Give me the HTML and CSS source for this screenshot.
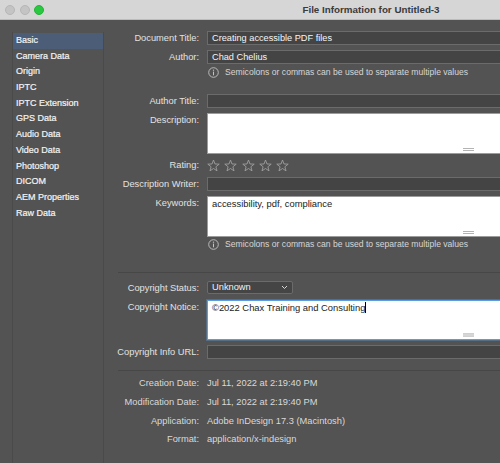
FILE: index.html
```html
<!DOCTYPE html>
<html lang="en">
<head>
    <meta charset="UTF-8">
    <meta name="viewport" content="width=device-width, initial-scale=1.0">
    <title>File Information for Untitled-3</title>
    <link rel="stylesheet" href="styles.css">
</head>
<body>
<div class="window">
    <div class="titlebar">
        <div class="lights">
            <span class="light"></span>
            <span class="light"></span>
            <span class="light green"></span>
        </div>
        <div class="title">File Information for Untitled-3</div>
        <div></div>
    </div>

    <div class="content">
        <div class="sidebar">
            <a href="#" class="menu-item active">Basic</a>
            <a href="#" class="menu-item">Camera Data</a>
            <a href="#" class="menu-item">Origin</a>
            <a href="#" class="menu-item">IPTC</a>
            <a href="#" class="menu-item">IPTC Extension</a>
            <a href="#" class="menu-item">GPS Data</a>
            <a href="#" class="menu-item">Audio Data</a>
            <a href="#" class="menu-item">Video Data</a>
            <a href="#" class="menu-item">Photoshop</a>
            <a href="#" class="menu-item">DICOM</a>
            <a href="#" class="menu-item">AEM Properties</a>
            <a href="#" class="menu-item">Raw Data</a>
        </div>

        <div class="form">
            <div class="row">
                <div class="label">Document Title:</div>
                <div class="input">Creating accessible PDF files</div>
            </div>
            <div class="row mt-5">
                <div class="label">Author:</div>
                <div class="input">Chad Chelius</div>
            </div>
            <div class="row mt-1">
                <div></div>
                <div class="info">
                    <svg class="info-icon" width="11" height="11" viewBox="0 0 11 11">
                        <circle cx="5.5" cy="5.5" r="4.8" fill="none" stroke="#c4c4c4" stroke-width="0.9"/>
                        <circle cx="5.5" cy="3.2" r="0.65" fill="#c4c4c4"/>
                        <line x1="5.5" y1="4.6" x2="5.5" y2="8.3" stroke="#c4c4c4" stroke-width="1"/>
                    </svg>
                    <span>Semicolons or commas can be used to separate multiple values</span>
                </div>
            </div>
            <div class="row mt-15">
                <div class="label">Author Title:</div>
                <div class="input"></div>
            </div>
            <div class="row mt-5">
                <div class="label">Description:</div>
                <div class="area"><span></span><div class="grip"></div></div>
            </div>
            <div class="row mt-4">
                <div class="label">Rating:</div>
                <div class="stars">
                    <svg width="13" height="13" viewBox="0 0 13 13"><polygon points="6.5,1 7.97,4.98 12.21,5.15 8.88,7.77 10.03,11.85 6.5,9.5 2.97,11.85 4.12,7.77 0.79,5.15 5.03,4.98"/></svg>
                    <svg width="13" height="13" viewBox="0 0 13 13"><polygon points="6.5,1 7.97,4.98 12.21,5.15 8.88,7.77 10.03,11.85 6.5,9.5 2.97,11.85 4.12,7.77 0.79,5.15 5.03,4.98"/></svg>
                    <svg width="13" height="13" viewBox="0 0 13 13"><polygon points="6.5,1 7.97,4.98 12.21,5.15 8.88,7.77 10.03,11.85 6.5,9.5 2.97,11.85 4.12,7.77 0.79,5.15 5.03,4.98"/></svg>
                    <svg width="13" height="13" viewBox="0 0 13 13"><polygon points="6.5,1 7.97,4.98 12.21,5.15 8.88,7.77 10.03,11.85 6.5,9.5 2.97,11.85 4.12,7.77 0.79,5.15 5.03,4.98"/></svg>
                    <svg width="13" height="13" viewBox="0 0 13 13"><polygon points="6.5,1 7.97,4.98 12.21,5.15 8.88,7.77 10.03,11.85 6.5,9.5 2.97,11.85 4.12,7.77 0.79,5.15 5.03,4.98"/></svg>
                </div>
            </div>
            <div class="row mt-5">
                <div class="label">Description Writer:</div>
                <div class="input"></div>
            </div>
            <div class="row mt-5">
                <div class="label">Keywords:</div>
                <div class="area"><span>accessibility, pdf, compliance</span><div class="grip"></div></div>
            </div>
            <div class="row">
                <div></div>
                <div class="info">
                    <svg class="info-icon" width="11" height="11" viewBox="0 0 11 11">
                        <circle cx="5.5" cy="5.5" r="4.8" fill="none" stroke="#c4c4c4" stroke-width="0.9"/>
                        <circle cx="5.5" cy="3.2" r="0.65" fill="#c4c4c4"/>
                        <line x1="5.5" y1="4.6" x2="5.5" y2="8.3" stroke="#c4c4c4" stroke-width="1"/>
                    </svg>
                    <span>Semicolons or commas can be used to separate multiple values</span>
                </div>
            </div>

            <div class="separator sep-1"></div>

            <div class="row">
                <div class="label">Copyright Status:</div>
                <div class="select">
                    <span>Unknown</span>
                    <svg width="7" height="5" viewBox="0 0 7 5"><polyline points="1,1 3.5,3.5 6,1" fill="none" stroke="#d8d8d8" stroke-width="1"/></svg>
                </div>
            </div>
            <div class="row mt-5">
                <div class="label">Copyright Notice:</div>
                <div class="area focused"><span>©2022 Chax Training and Consulting<span class="caret"></span></span><div class="grip solid"></div></div>
            </div>
            <div class="row mt-5">
                <div class="label">Copyright Info URL:</div>
                <div class="input"></div>
            </div>

            <div class="separator sep-2"></div>

            <div class="details">
                <div class="row detail">
                    <div class="label">Creation Date:</div>
                    <div class="value">Jul 11, 2022 at 2:19:40 PM</div>
                </div>
                <div class="row detail">
                    <div class="label">Modification Date:</div>
                    <div class="value">Jul 11, 2022 at 2:19:40 PM</div>
                </div>
                <div class="row detail">
                    <div class="label">Application:</div>
                    <div class="value">Adobe InDesign 17.3 (Macintosh)</div>
                </div>
                <div class="row detail">
                    <div class="label">Format:</div>
                    <div class="value">application/x-indesign</div>
                </div>
            </div>
        </div>
    </div>
</div>
</body>
</html>
```

FILE: styles.css
```css
body {
    margin: 0;
    padding: 0;
    width: 500px;
    height: 463px;
    overflow: hidden;
    background-color: #535353;
    font-family: "Liberation Sans", Arial, sans-serif;
}

.window {
    width: 742px;
    height: 463px;
    display: flex;
    flex-direction: column;
}

/* title bar */
.titlebar {
    flex: none;
    height: 20px;
    box-sizing: border-box;
    background-color: #d6d6d6;
    border-bottom: 1px solid #bcbcbc;
    display: grid;
    grid-template-columns: 1fr auto 1fr;
    align-items: center;
}

.lights {
    display: flex;
    gap: 4.5px;
    padding-left: 5px;
}

.light {
    width: 10px;
    height: 10px;
    box-sizing: border-box;
    border-radius: 50%;
    background-color: #c4c4c4;
    border: 1px solid #b6b6b6;
}

.light.green {
    background-color: #2ac840;
    border-color: #23b338;
}

.title {
    font-size: 9.8px;
    font-weight: bold;
    color: #3b3b3b;
}

/* main area */
.content {
    flex: 1;
    display: flex;
    min-height: 0;
}

.sidebar {
    width: 90px;
    margin: 12px 0 0 12px;
    padding-top: 1px;
    border-left: 1px solid #4a4a4a;
    border-right: 1px solid #4a4a4a;
}

.menu-item {
    display: block;
    height: 15.7px;
    line-height: 15.7px;
    padding-left: 3px;
    font-size: 9px;
    color: #f4f4f4;
    text-decoration: none;
    -webkit-text-stroke: 0.2px #f4f4f4;
}

.menu-item.active {
    background-color: #4c5d77;
}

.form {
    flex: 1;
    padding: 11px 13px 0 0;
    display: flex;
    flex-direction: column;
}

.row {
    display: grid;
    grid-template-columns: 95px 1fr;
    column-gap: 8px;
    align-items: start;
    font-size: 9.3px;
    line-height: 14px;
}

.mt-1 { margin-top: 1px; }
.mt-4 { margin-top: 4px; }
.mt-5 { margin-top: 5px; }
.mt-15 { margin-top: 15px; }

.label {
    text-align: right;
    color: #e2e2e2;
    white-space: nowrap;
}

.input {
    height: 14px;
    box-sizing: border-box;
    background-color: #444444;
    border: 1px solid #6b6b6b;
    padding: 0 4px;
    line-height: 12px;
    font-size: 9.2px;
    color: #f5f5f5;
}

.area {
    height: 41px;
    box-sizing: border-box;
    background-color: #ffffff;
    border: 1px solid #9c9c9c;
    padding: 1px 4px 2px;
    display: flex;
    flex-direction: column;
    line-height: 12px;
    font-size: 9.4px;
    color: #222222;
}

.area.focused {
    height: 40px;
    border-color: #5b9de4;
    box-shadow: 0 0 0 1px rgba(91, 157, 228, 0.35);
}

.grip {
    margin-top: auto;
    align-self: center;
    width: 11px;
    height: 3px;
    box-sizing: border-box;
    border-top: 1px solid #b3b3b3;
    border-bottom: 1px solid #b3b3b3;
}

.grip.solid {
    height: 4px;
    background-color: #d6d6d6;
    border-color: #d0d0d0;
}

.caret {
    display: inline-block;
    width: 1px;
    height: 11px;
    background-color: #000;
    vertical-align: -2px;
}

.info {
    display: flex;
    align-items: center;
    gap: 6px;
    padding-left: 1px;
    font-size: 8.6px;
    color: #d6d6d6;
}

.info-icon {
    flex: none;
}

.stars {
    display: flex;
    gap: 4.25px;
    padding-top: 1px;
}

.stars polygon {
    fill: none;
    stroke: #9e9e9e;
    stroke-width: 0.9;
    stroke-linejoin: round;
}

.separator {
    margin-left: 14px;
    border-top: 1px solid #474747;
}

.sep-1 {
    margin-top: 21px;
    margin-bottom: 8px;
}

.sep-2 {
    margin-top: 11px;
    margin-bottom: 3px;
}

.select {
    width: 86px;
    height: 13px;
    box-sizing: border-box;
    background-color: #454545;
    border: 1px solid #6b6b6b;
    border-radius: 2px;
    padding: 0 4px;
    display: flex;
    align-items: center;
    justify-content: space-between;
    line-height: 11px;
    color: #f2f2f2;
}

.detail {
    line-height: 18.8px;
}

.detail .label,
.detail .value {
    color: #d9d9d9;
}
```
